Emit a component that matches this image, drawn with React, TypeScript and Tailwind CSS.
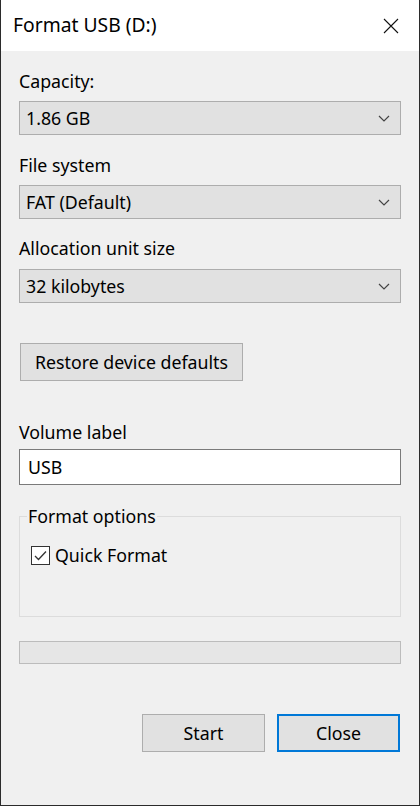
import React from 'react'

const font = { fontFamily: '"Noto Sans", "Liberation Sans", sans-serif' }

function Chevron() {
  return (
    <svg width="12" height="7" viewBox="0 0 12 7" className="shrink-0">
      <polyline points="1,1 6,6 11,1" fill="none" stroke="#444" strokeWidth="1.2" />
    </svg>
  )
}

function Select({ value }: { value: string }) {
  return (
    <div className="flex items-center justify-between h-[34px] border border-[#adadad] bg-[#e1e1e1] pl-[6px] pr-[10px] text-[17.75px] text-black">
      <span>{value}</span>
      <Chevron />
    </div>
  )
}

function Label({ children, className = '' }: { children: React.ReactNode; className?: string }) {
  return <div className={`text-[17.75px] leading-[22px] text-black ${className}`}>{children}</div>
}

export default function App() {
  return (
    <div
      className="w-[420px] h-[806px] flex flex-col bg-[#f0f0f0] border-l border-r border-b border-[#2b2b2b] overflow-hidden"
      style={font}
    >
      <div className="h-[51px] shrink-0 bg-white flex items-center justify-between pl-[12px] pr-[20px]">
        <span className="text-[19.3px] text-black">Format USB (D:)</span>
        <svg width="16" height="16" viewBox="0 0 16 16">
          <path d="M1 1 L15 15 M15 1 L1 15" stroke="#111" strokeWidth="1.1" fill="none" />
        </svg>
      </div>

      <div className="flex flex-col px-[18px] pt-[19px]">
        <Label>Capacity:</Label>
        <div className="mt-[9px]">
          <Select value="1.86 GB" />
        </div>

        <Label className="mt-[19px]">File system</Label>
        <div className="mt-[9px]">
          <Select value="FAT (Default)" />
        </div>

        <Label className="mt-[18px]">Allocation unit size</Label>
        <div className="mt-[10px]">
          <Select value="32 kilobytes" />
        </div>

        <div className="mt-[40px] flex">
          <button className="ml-[1px] w-[223px] h-[38px] border border-[#adadad] bg-[#e1e1e1] text-[17.75px] text-black">
            Restore device defaults
          </button>
        </div>

        <Label className="mt-[40px]">Volume label</Label>
        <div className="mt-[6px] h-[36px] border border-[#7a7a7a] bg-white flex items-center pl-[8px] text-[17.75px] text-black">
          USB
        </div>

        <fieldset className="mt-[20px] h-[112px] border border-[#dcdcdc] px-[11px]">
          <legend className="px-[1px] -ml-[4px] text-[17.75px] leading-[22px] text-black">Format options</legend>
          <div className="mt-[17px] flex items-center gap-[5px]">
            <div className="w-[19px] h-[19px] border border-[#333] bg-white flex items-center justify-center">
              <svg width="13" height="11" viewBox="0 0 13 11">
                <polyline points="1,6 4.5,9.5 12,1.5" fill="none" stroke="#333" strokeWidth="1.3" />
              </svg>
            </div>
            <span className="text-[17.75px] leading-[22px] text-black">Quick Format</span>
          </div>
        </fieldset>

        <div className="mt-[24px] h-[23px] border border-[#bcbcbc] bg-[#e6e6e6]" />

        <div className="mt-[50px] flex justify-end gap-[12px] pr-[1px]">
          <button className="w-[123px] h-[38px] border border-[#adadad] bg-[#e1e1e1] text-[17.75px] text-black">
            Start
          </button>
          <button className="w-[123px] h-[38px] border-2 border-[#0078d7] bg-[#e1e1e1] text-[17.75px] text-black">
            Close
          </button>
        </div>
      </div>
    </div>
  )
}
